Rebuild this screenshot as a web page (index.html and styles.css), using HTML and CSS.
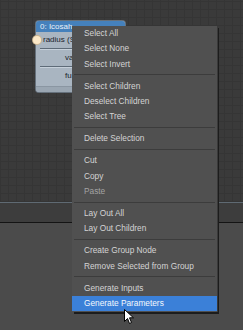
FILE: index.html
```html
<!DOCTYPE html>
<html lang="en">

<head>
  <meta charset="utf-8">
  <title>Node Graph</title>
  <link rel="stylesheet" href="styles.css">
</head>

<body>
  <div class="app">
    <div class="graph">
      <div class="node">
        <div class="node-title">0: Icosah</div>
        <div class="node-row">
          <span class="port"></span>
          <span class="node-label">radius (S</span>
        </div>
        <div class="node-sep"></div>
        <div class="node-row centered">va</div>
        <div class="node-sep"></div>
        <div class="node-row centered">fu</div>
        <div class="node-foot"></div>
      </div>
    </div>
    <div class="toolbar"></div>
    <div class="panel"></div>

    <ul class="menu">
      <li>Select All</li>
      <li>Select None</li>
      <li>Select Invert</li>
      <li class="sep"></li>
      <li>Select Children</li>
      <li>Deselect Children</li>
      <li>Select Tree</li>
      <li class="sep"></li>
      <li>Delete Selection</li>
      <li class="sep"></li>
      <li>Cut</li>
      <li>Copy</li>
      <li class="disabled">Paste</li>
      <li class="sep"></li>
      <li>Lay Out All</li>
      <li>Lay Out Children</li>
      <li class="sep"></li>
      <li>Create Group Node</li>
      <li>Remove Selected from Group</li>
      <li class="sep"></li>
      <li>Generate Inputs</li>
      <li class="active">Generate Parameters</li>
    </ul>

    <svg class="cursor" width="11" height="16" viewBox="0 0 11 16">
      <path d="M0.5 0.5 L0.5 12.5 L3.5 9.5 L5.5 14.5 L7.5 13.5 L5.5 8.8 L9.5 8.8 Z" fill="#fff" stroke="#000" stroke-width="1" />
    </svg>
  </div>
</body>

</html>
```

FILE: styles.css
```css
html,
body {
  margin: 0;
  padding: 0;
}

body {
  width: 243px;
  height: 330px;
  overflow: hidden;
  font-family: 'Liberation Sans', Arial, sans-serif;
}

.app {
  position: relative;
  display: flex;
  flex-direction: column;
  height: 330px;
  background: #4a4a4a;
}

.graph {
  position: relative;
  height: 202px;
  background-color: #3a3a3a;
  background-image:
    repeating-linear-gradient(90deg, #353535 0 1px, transparent 1px 8px),
    repeating-linear-gradient(0deg, #353535 0 1px, transparent 1px 8px);
}

.toolbar {
  height: 19px;
  border-top: 1px solid #5f6a73;
  border-bottom: 1px solid #141414;
  background: #3d3d3d;
}

.panel {
  flex: 1;
  background: #4b4b4b;
}

/* node on the canvas */
.node {
  position: absolute;
  left: 36px;
  top: 21px;
  width: 89px;
  height: 71px;
  border-radius: 3px;
  background: #a9b5c1;
  box-shadow: 0 0 0 1px #66717c;
  font-size: 8px;
  color: #1a222c;
}

.node-title {
  height: 11px;
  line-height: 11px;
  padding-left: 4px;
  border-radius: 3px 3px 0 0;
  background: #4581bc;
  color: #e9f0f7;
  white-space: nowrap;
  overflow: hidden;
}

.node-row {
  position: relative;
  height: 10px;
  line-height: 10px;
  margin-top: 3px;
  padding-left: 7px;
  white-space: nowrap;
}

.node-row.centered {
  padding-left: 29px;
}

.port {
  position: absolute;
  left: -3px;
  top: 1px;
  width: 8px;
  height: 8px;
  border-radius: 50%;
  background: #fbe8c8;
  box-shadow: 0 0 0 1px #c9b38f;
}

.node-sep {
  height: 1px;
  margin: 3px 0 0 4px;
  background: #5e6b78;
  border-bottom: 1px solid #c6d0da;
}

.node-foot {
  position: absolute;
  left: 0;
  right: 0;
  bottom: 0;
  height: 5px;
  border-top: 1px solid #8a96a2;
  border-radius: 0 0 3px 3px;
  background: #9aa6b2;
}

/* context menu */
.menu {
  position: absolute;
  left: 72px;
  top: 26px;
  width: 145px;
  margin: 0;
  padding: 0 0 1px;
  list-style: none;
  background: #505050;
  box-shadow: 1px 0 0 #3a3a3a, 2px 2px 0 #1c1c1c;
  font-size: 8.3px;
  color: #d4d4d4;
}

.menu li {
  height: 15.33px;
  line-height: 15.33px;
  padding-left: 12px;
  white-space: nowrap;
}

.menu li.sep {
  height: 1px;
  margin: 2.5px 2px 3.17px;
  padding: 0;
  background: #3c3c3c;
}

.menu li.disabled {
  color: #a3a3a3;
}

.menu li.active {
  background: #3b80d8;
  color: #f4f8fd;
}

.cursor {
  position: absolute;
  left: 124px;
  top: 309px;
}
```
